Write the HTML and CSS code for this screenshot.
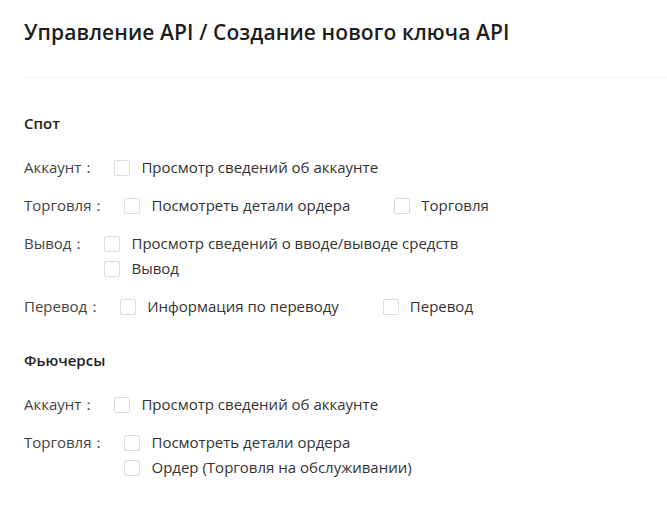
FILE: index.html
```html
<!DOCTYPE html>
<html>
<head>
  <title>Управление API</title>
  <link rel="stylesheet" href="styles.css">
</head>
<body>
  <div class="page">
    <div class="page-header">
      <h1>Управление API / Создание нового ключа API</h1>
    </div>

    <div class="perm-section">
      <h2>Спот</h2>
      <div class="perm-row">
        <div class="perm-label">Аккаунт：</div>
        <div class="perm-options">
          <label class="perm-option"><span class="box"></span>Просмотр сведений об аккаунте</label>
        </div>
      </div>
      <div class="perm-row">
        <div class="perm-label">Торговля：</div>
        <div class="perm-options">
          <label class="perm-option"><span class="box"></span>Посмотреть детали ордера</label>
          <label class="perm-option"><span class="box"></span>Торговля</label>
        </div>
      </div>
      <div class="perm-row">
        <div class="perm-label">Вывод：</div>
        <div class="perm-options stacked">
          <label class="perm-option"><span class="box"></span>Просмотр сведений о вводе/выводе средств</label>
          <label class="perm-option"><span class="box"></span>Вывод</label>
        </div>
      </div>
      <div class="perm-row">
        <div class="perm-label">Перевод：</div>
        <div class="perm-options">
          <label class="perm-option"><span class="box"></span>Информация по переводу</label>
          <label class="perm-option"><span class="box"></span>Перевод</label>
        </div>
      </div>
    </div>

    <div class="perm-section next">
      <h2>Фьючерсы</h2>
      <div class="perm-row">
        <div class="perm-label">Аккаунт：</div>
        <div class="perm-options">
          <label class="perm-option"><span class="box"></span>Просмотр сведений об аккаунте</label>
        </div>
      </div>
      <div class="perm-row">
        <div class="perm-label">Торговля：</div>
        <div class="perm-options stacked">
          <label class="perm-option"><span class="box"></span>Посмотреть детали ордера</label>
          <label class="perm-option"><span class="box"></span>Ордер (Торговля на обслуживании)</label>
        </div>
      </div>
    </div>
  </div>
</body>
</html>
```

FILE: styles.css
```css
body {
  margin: 0;
  background: #fff;
  font-family: "Open Sans", "Noto Sans", sans-serif;
  color: #333;
}

.page {
  padding-left: 24px;
}

.page-header {
  height: 78px;
  border-bottom: 1px solid #eeeeee;
  box-sizing: border-box;
}

.page-header h1 {
  margin: 0;
  padding-top: 17px;
  font-size: 21px;
  font-weight: 600;
  color: #1e1e1e;
  line-height: 30px;
  letter-spacing: 0.1px;
}

.perm-section {
  padding-top: 34px;
}

.perm-section.next {
  padding-top: 17px;
}

.perm-section h2 {
  margin: 0 0 21px 0;
  font-size: 15px;
  font-weight: 600;
  color: #222;
  line-height: 22px;
}

.perm-row {
  display: flex;
  align-items: flex-start;
  margin-bottom: 13px;
  font-size: 15px;
  line-height: 25px;
}

.perm-label {
  margin-right: 18px;
  color: #444;
}

.perm-options {
  display: flex;
  gap: 44px;
}

.perm-options.stacked {
  flex-direction: column;
  gap: 0;
}

.perm-option {
  display: flex;
  align-items: center;
  color: #333;
}

.box {
  width: 16px;
  height: 16px;
  border: 1px solid #dcdcdc;
  border-radius: 2px;
  box-sizing: border-box;
  margin-right: 11px;
  background: #fff;
}
```
